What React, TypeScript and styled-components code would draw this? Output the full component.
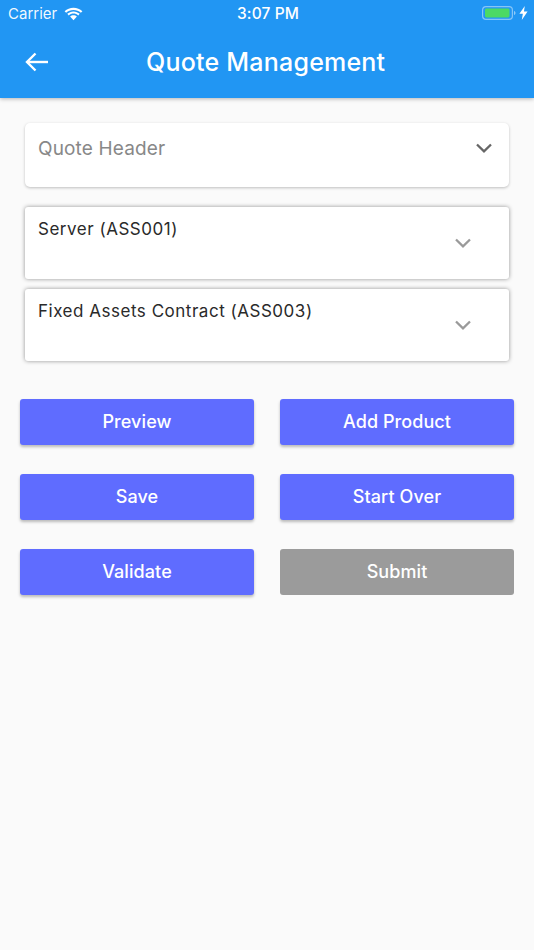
import React from "react";
import styled, { createGlobalStyle } from "styled-components";

const Global = createGlobalStyle`
  html, body { margin: 0; padding: 0; background: #fafafa; }
  body { font-family: Inter, "Noto Sans", "Liberation Sans", sans-serif; -webkit-font-smoothing: antialiased; }
`;

const Page = styled.div`
  width: 534px;
  height: 950px;
  background: #fafafa;
  overflow: hidden;
  display: flex;
  flex-direction: column;
`;

const Header = styled.header`
  height: 98px;
  background: #2196f3;
  color: #fff;
  box-shadow: 0 1px 4px rgba(0, 0, 0, 0.28);
  display: flex;
  flex-direction: column;
`;

const StatusBar = styled.div`
  height: 27px;
  padding: 0 6px 0 8px;
  display: grid;
  grid-template-columns: 1fr auto 1fr;
  align-items: center;
`;

const StatusLeft = styled.div`
  display: flex;
  align-items: center;
  gap: 7px;
  font-size: 15px;
  color: rgba(255, 255, 255, 0.95);
`;

const StatusTime = styled.div`
  font-weight: 500;
  font-size: 15.5px;
  letter-spacing: 0.1px;
`;

const StatusRight = styled.div`
  display: flex;
  justify-content: flex-end;
  align-items: center;
  gap: 3px;
  margin-top: -1px;
`;

const Toolbar = styled.div`
  height: 71px;
  padding: 0 0 2px 24px;
  box-sizing: border-box;
  display: flex;
  align-items: center;
`;

const Title = styled.h1`
  margin: 1px 0 0 97px;
  font-size: 25px;
  font-weight: 500;
  letter-spacing: 0.22px;
`;

const Content = styled.main`
  padding: 25px 20px 0;
  display: flex;
  flex-direction: column;
`;

const Cards = styled.div`
  padding: 0 5px;
  display: flex;
  flex-direction: column;
  gap: 10px;
`;

const HeaderCard = styled.div`
  height: 64px;
  margin-bottom: 10px;
  box-sizing: border-box;
  padding: 13px 17.5px 0 13px;
  background: #fff;
  border-radius: 5px;
  box-shadow: 0 1px 3px rgba(0, 0, 0, 0.24);
  display: flex;
  justify-content: space-between;
  align-items: flex-start;
`;

const HeaderLabel = styled.span`
  font-size: 19px;
  line-height: 25px;
  color: #888;
  letter-spacing: 0.15px;
`;

const ItemCard = styled.div`
  height: 72px;
  box-sizing: border-box;
  padding: 11px 38.5px 0 13px;
  background: #fff;
  border-radius: 3px;
  box-shadow: 0 0 4px rgba(0, 0, 0, 0.42);
  display: flex;
  justify-content: space-between;
  align-items: flex-start;
`;

const ItemLabel = styled.span`
  font-size: 17px;
  line-height: 23px;
  color: #2a2a2a;
  letter-spacing: 0.52px;
`;

const ChevronSlot = styled.svg<{ $top: number }>`
  display: block;
  margin-top: ${(p) => p.$top}px;
`;

const ButtonGrid = styled.div`
  margin-top: 38px;
  display: grid;
  grid-template-columns: 234px 234px;
  column-gap: 26px;
  row-gap: 29px;
`;

const ActionButton = styled.button<{ $disabled?: boolean }>`
  height: 46px;
  padding: 0 0 2px;
  border: 0;
  border-radius: 3px;
  font-family: inherit;
  font-size: 18px;
  font-weight: 500;
  letter-spacing: 0.08px;
  color: #fff;
  background: ${(p) => (p.$disabled ? "#9b9b9b" : "#5f6cff")};
  box-shadow: ${(p) => (p.$disabled ? "none" : "0 2px 3px rgba(0, 0, 0, 0.26)")};
`;

const Wifi = () => (
  <svg width="19" height="14" viewBox="0 0 19 14" fill="#fff">
    <path d="M9.500 3C12.300 3 14.900 4 16.900 5.800L18.400 4.200C16 2 12.900.7 9.500.7S3 2 .6 4.200L2.100 5.800C4.100 4 6.700 3 9.500 3Z" />
    <path d="M9.500 6.600C11.300 6.600 12.900 7.200 14.200 8.400L15.700 6.800C14 5.300 11.900 4.400 9.500 4.400S5 5.300 3.300 6.800L4.800 8.400C6.100 7.200 7.700 6.600 9.500 6.600Z" />
    <path d="M9.500 8.200C8.200 8.200 7 8.700 6.100 9.500L9.500 13.200L12.900 9.500C12 8.700 10.800 8.200 9.500 8.200Z" />
  </svg>
);

const Battery = () => (
  <svg width="34" height="14" viewBox="0 0 34 14">
    <rect x="0.6" y="0.6" width="29.8" height="12.8" rx="3.4" fill="none" stroke="rgba(255,255,255,0.45)" strokeWidth="1.2" />
    <rect x="3" y="2.500" width="24.500" height="9" rx="1.4" fill="#4cd964" />
    <path d="M32 5v4c.9-.3 1.500-1.100 1.500-2S32.900 5.300 32 5Z" fill="rgba(255,255,255,0.5)" />
  </svg>
);

const Bolt = () => (
  <svg width="9" height="14" viewBox="0 0 8 13" fill="#fff">
    <path d="M5.200 0 0.200 7.300H3.400L2.400 13 7.800 5.200H4.400L5.200 0Z" />
  </svg>
);

const BackArrow = () => (
  <svg width="25" height="24" viewBox="0 0 25 24" fill="none" stroke="#fff" strokeWidth="2.400">
    <path d="M24 12H3" />
    <path d="M11.500 3.500 3 12l8.500 8.500" />
  </svg>
);

const Chevron = ({ color, top }: { color: string; top: number }) => (
  <ChevronSlot $top={top} width="16" height="10" viewBox="0 0 16 10" fill="none" stroke={color} strokeWidth="2.300">
    <path d="M1 1.500 8 8.300l7-6.800" />
  </ChevronSlot>
);

const App = () => (
  <>
    <Global />
    <Page>
      <Header>
        <StatusBar>
          <StatusLeft>
            Carrier
            <Wifi />
          </StatusLeft>
          <StatusTime>3:07 PM</StatusTime>
          <StatusRight>
            <Battery />
            <Bolt />
          </StatusRight>
        </StatusBar>
        <Toolbar>
          <BackArrow />
          <Title>Quote Management</Title>
        </Toolbar>
      </Header>
      <Content>
        <Cards>
          <HeaderCard>
            <HeaderLabel>Quote Header</HeaderLabel>
            <Chevron color="#666" top={7} />
          </HeaderCard>
          <ItemCard>
            <ItemLabel>Server (ASS001)</ItemLabel>
            <Chevron color="#9a9a9a" top={20} />
          </ItemCard>
          <ItemCard>
            <ItemLabel>Fixed Assets Contract (ASS003)</ItemLabel>
            <Chevron color="#9a9a9a" top={20} />
          </ItemCard>
        </Cards>
        <ButtonGrid>
          <ActionButton>Preview</ActionButton>
          <ActionButton>Add Product</ActionButton>
          <ActionButton>Save</ActionButton>
          <ActionButton>Start Over</ActionButton>
          <ActionButton>Validate</ActionButton>
          <ActionButton $disabled>Submit</ActionButton>
        </ButtonGrid>
      </Content>
    </Page>
  </>
);

export default App;
